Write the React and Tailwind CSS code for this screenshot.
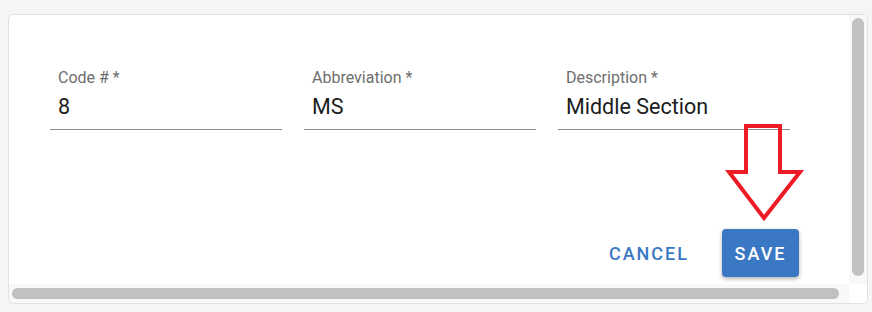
import React from "react";

function Field({ label, value }) {
  return (
    <div className="w-[232px] border-b border-[#8c8c8c]">
      <div className="pl-2 text-[16px] leading-[20px] text-[#6e6e6e]">{label}</div>
      <div className="pl-2 pt-[6px] pb-[9px] text-[21.5px] leading-[26px] text-[#1c1c1c]">{value}</div>
    </div>
  );
}

function RedArrow() {
  return (
    <svg className="absolute left-[700px] top-[95px]" width="100" height="114" viewBox="0 0 100 114">
      <path
        d="M37 16 H71 V62 H91 L55 108 L20 62 H37 Z"
        fill="none"
        stroke="#ed1c24"
        strokeWidth="4"
        strokeLinejoin="miter"
      />
    </svg>
  );
}

export default function App() {
  return (
    <div className="h-[312px] w-[872px] bg-[#f4f5f7] pl-2 pt-[14px] font-['Roboto',sans-serif]">
      <div className="relative flex h-[290px] w-[860px] flex-col overflow-hidden rounded-md border border-[#dfe1e5] bg-white">
        <div className="flex min-h-0 flex-1">
          <div className="flex-1 pl-[41px] pt-[53px]">
            <div className="flex gap-[22px]">
              <Field label="Code # *" value="8" />
              <Field label="Abbreviation *" value="MS" />
              <Field label="Description *" value="Middle Section" />
            </div>
            <div className="mt-[99px] flex items-center justify-end gap-[33px] pr-[50px]">
              <button className="text-[18px] font-medium tracking-[2px] text-[#3b78c4]">CANCEL</button>
              <button className="h-[48px] w-[77px] rounded-[4px] bg-[#3b78c4] text-[18px] font-medium tracking-[2px] text-white shadow-[0_2px_4px_rgba(0,0,0,0.3)]">
                SAVE
              </button>
            </div>
          </div>
          <div className="flex w-[18px] justify-center bg-[#f8f8f8] pt-[3px] pb-[8px]">
            <div className="w-[12px] rounded-full bg-[#c1c1c1]" />
          </div>
        </div>
        <div className="flex h-[19px]">
          <div className="flex flex-1 items-center bg-[#f8f8f8] pl-[3px] pr-[10px]">
            <div className="h-[11px] w-full rounded-full bg-[#c1c1c1]" />
          </div>
          <div className="w-[18px] bg-white" />
        </div>
        <RedArrow />
      </div>
    </div>
  );
}
